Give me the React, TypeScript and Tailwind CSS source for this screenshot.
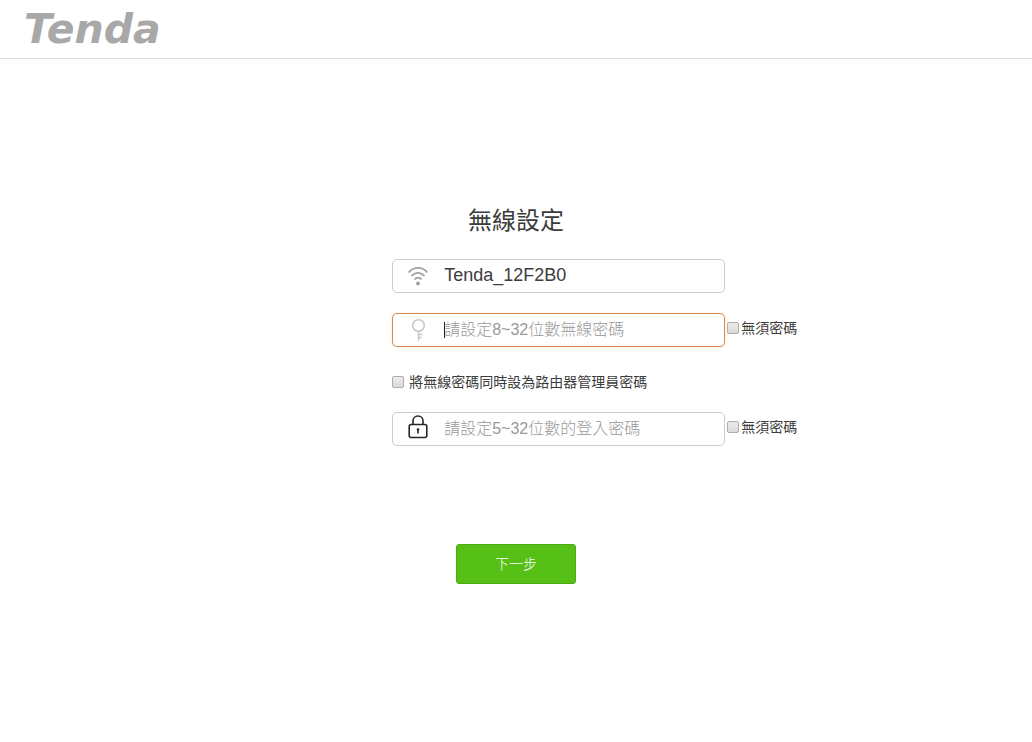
import React, { useState } from 'react';

interface CheckFieldProps {
    id: string;
    label: string;
    gap: string;
    checked: boolean;
    onChange: (checked: boolean) => void;
}

function CheckField({ id, label, gap, checked, onChange }: CheckFieldProps) {
    return (
        <div className={`flex items-center whitespace-nowrap ${gap}`}>
            <input
                id={id}
                type="checkbox"
                checked={checked}
                onChange={(e) => onChange(e.target.checked)}
                className="h-3 w-3 shrink-0 appearance-none rounded-xs border border-[#adadad] bg-linear-to-b from-[#ececec] to-[#dadada] checked:bg-[#57c016]"
            />
            <label htmlFor={id} className="text-sm leading-5 text-[#3c3c3c]">
                {label}
            </label>
        </div>
    );
}

function WifiIcon() {
    return (
        <svg viewBox="0 0 22 22" className="h-[22px] w-[22px]" fill="none" stroke="#a2a2a2" strokeWidth="1.8" aria-hidden="true">
            <path d="M1.500 7.500C7 1.300 15 1.300 20.500 7.500" />
            <path d="M4.500 11C8.300 6.700 13.700 6.700 17.500 11" />
            <path d="M7.500 14.500C9.700 12 12.300 12 14.500 14.500" />
            <circle cx="11" cy="18.500" r="1.900" fill="#a2a2a2" stroke="none" />
        </svg>
    );
}

function KeyIcon() {
    return (
        <svg viewBox="0 0 22 24" className="h-6 w-[22px]" fill="none" stroke="#c6c6c6" strokeWidth="1.500" aria-hidden="true">
            <circle cx="11.500" cy="7.500" r="5.800" />
            <path d="M11.500 13.300V22.500M11.500 16.500H15.500M11.500 19.500H14.500" />
        </svg>
    );
}

function LockIcon() {
    return (
        <svg viewBox="0 2 22 24" className="h-6 w-[22px]" fill="none" stroke="#262626" strokeWidth="1.600" aria-hidden="true">
            <rect x="2.200" y="9.500" width="17.600" height="13" rx="2" />
            <path d="M6 9.500V6C6 3.300 8 1 11 1S16 3.300 16 6V9.500" />
            <circle cx="11" cy="14.500" r="1.300" fill="#262626" stroke="none" />
            <path d="M11 14.500V18.500" />
        </svg>
    );
}

export default function App() {
    const [ssid, setSsid] = useState('Tenda_12F2B0');
    const [wifiPassword, setWifiPassword] = useState('');
    const [loginPassword, setLoginPassword] = useState('');
    const [noWifiPassword, setNoWifiPassword] = useState(false);
    const [noLoginPassword, setNoLoginPassword] = useState(false);
    const [samePassword, setSamePassword] = useState(false);

    const fieldClass = 'flex h-[34px] w-[333px] shrink-0 items-center rounded-[5px] border bg-white pl-[14px] [&>svg]:shrink-0 [&>svg]:overflow-visible';
    const inputClass = 'h-8 w-full bg-transparent text-[#3c3c3c] outline-none placeholder:font-light placeholder:text-[#999999]';

    return (
        <div className="min-h-screen bg-white font-['Liberation_Sans','Noto_Sans_CJK_TC',sans-serif]">
            {/* Header */}
            <header className="flex h-[59px] items-center border-b border-[#dddddd] px-6">
                <a href="#" className="font-['DejaVu_Sans',sans-serif] text-[41px] leading-[52px] font-bold text-[#a8a8a8] italic">
                    Tenda
                </a>
            </header>

            <main className="pt-36">
                <h1 className="text-center text-2xl leading-9 text-[#3c3c3c]">無線設定</h1>

                <form onSubmit={(e) => e.preventDefault()}>
                    <div className="mt-5 ml-[38%]">
                        {/* 無線名稱 */}
                        <div className={`${fieldClass} border-[#cccccc]`}>
                            <WifiIcon />
                            <div className="ml-[15px] flex-1 pb-0.5">
                                <input
                                    type="text"
                                    aria-label="無線名稱"
                                    value={ssid}
                                    onChange={(e) => setSsid(e.target.value)}
                                    className={`${inputClass} text-lg`}
                                />
                            </div>
                        </div>

                        {/* 無線密碼 */}
                        <div className="mt-5 flex gap-0.5">
                            <div className={`${fieldClass} border-[#d9894f] shadow-[0_0_2px_#fbe3b8]`}>
                                <KeyIcon />
                                <div className="relative ml-[15px] flex-1">
                                    <input
                                        type="text"
                                        autoFocus
                                        aria-label="無線密碼"
                                        placeholder="請設定8~32位數無線密碼"
                                        value={wifiPassword}
                                        onChange={(e) => setWifiPassword(e.target.value)}
                                        className={`${inputClass} text-base caret-transparent not-placeholder-shown:caret-black`}
                                    />
                                    {wifiPassword === '' && (
                                        <span className="pointer-events-none absolute top-2 left-0 h-4 w-px bg-[#222222]" />
                                    )}
                                </div>
                            </div>
                            <div className="pt-[5px]">
                                <CheckField id="no-wifi-password" label="無須密碼" gap="gap-0.5" checked={noWifiPassword} onChange={setNoWifiPassword} />
                            </div>
                        </div>

                        <div className="mt-[25px]">
                            <CheckField id="same-password" label="將無線密碼同時設為路由器管理員密碼" gap="gap-[5px]" checked={samePassword} onChange={setSamePassword} />
                        </div>

                        {/* 登入密碼 */}
                        <div className="mt-5 flex gap-0.5">
                            <div className={`${fieldClass} border-[#cccccc]`}>
                                <LockIcon />
                                <div className="ml-[15px] flex-1">
                                    <input
                                        type="text"
                                        aria-label="登入密碼"
                                        placeholder="請設定5~32位數的登入密碼"
                                        value={loginPassword}
                                        onChange={(e) => setLoginPassword(e.target.value)}
                                        className={`${inputClass} text-base`}
                                    />
                                </div>
                            </div>
                            <div className="pt-[5px]">
                                <CheckField id="no-login-password" label="無須密碼" gap="gap-0.5" checked={noLoginPassword} onChange={setNoLoginPassword} />
                            </div>
                        </div>
                    </div>

                    <div className="mt-[98px] flex justify-center">
                        <button type="submit" className="h-10 w-[120px] rounded-[3px] border border-[#4dab13] bg-[#57c016] text-sm font-light text-white">
                            下一步
                        </button>
                    </div>
                </form>
            </main>
        </div>
    );
}
